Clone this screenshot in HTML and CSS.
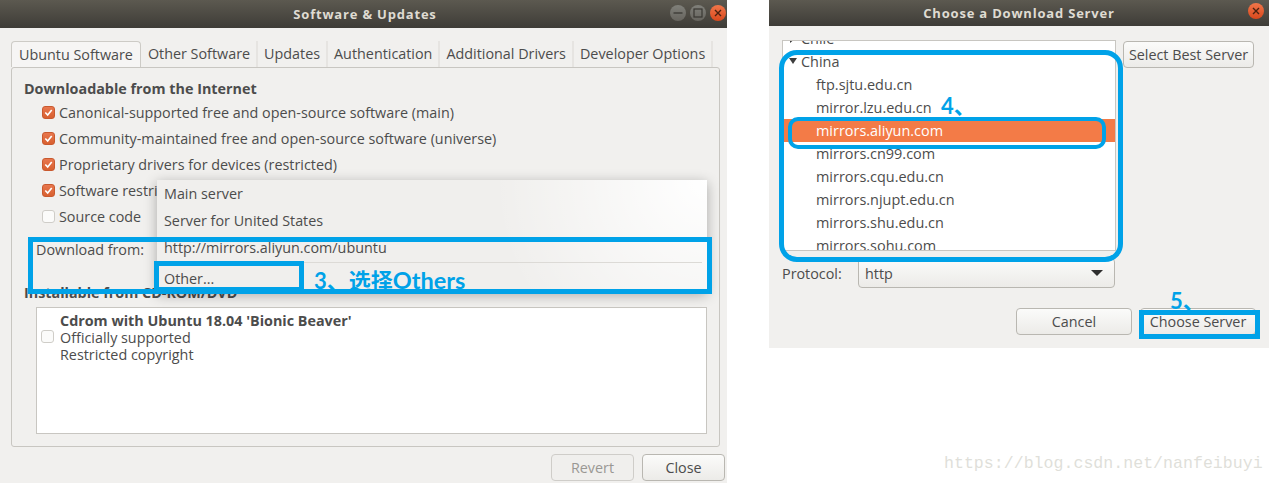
FILE: index.html
```html
<!DOCTYPE html>
<html lang="en">
<head>
  <meta charset="UTF-8">
  <title>Software &amp; Updates</title>
  <link rel="stylesheet" href="styles.css">
</head>
<body>
  <!-- main window -->
  <div class="window main-window">
    <div class="titlebar">
      <span class="title">Software &amp; Updates</span>
      <div class="win-buttons">
        <span class="win-btn"><svg width="16" height="16" viewBox="0 0 16 16"><path d="M3.5 8h9" stroke="#3a3833" stroke-width="1.3"/></svg></span>
        <span class="win-btn"><svg width="16" height="16" viewBox="0 0 16 16"><rect x="4" y="4" width="8" height="8" fill="none" stroke="#3a3833" stroke-width="1.2"/></svg></span>
        <span class="win-btn close"><svg width="16" height="16" viewBox="0 0 16 16"><path d="M5 5l6 6M11 5l-6 6" stroke="#4a2110" stroke-width="1.4"/></svg></span>
      </div>
    </div>

    <div class="tabs">
      <span class="tab active">Ubuntu Software</span>
      <span class="tab">Other Software</span>
      <span class="tab">Updates</span>
      <span class="tab">Authentication</span>
      <span class="tab">Additional Drivers</span>
      <span class="tab">Developer Options</span>
    </div>

    <div class="panel">
      <h2 class="section-title">Downloadable from the Internet</h2>
      <div class="checks">
        <div class="check-row"><span class="check on"><svg viewBox="0 0 12 12"><path d="M2.5 6l2.6 2.7 4.4-5.4" fill="none" stroke="#fff" stroke-width="1.8"/></svg></span>Canonical-supported free and open-source software (main)</div>
        <div class="check-row"><span class="check on"><svg viewBox="0 0 12 12"><path d="M2.5 6l2.6 2.7 4.4-5.4" fill="none" stroke="#fff" stroke-width="1.8"/></svg></span>Community-maintained free and open-source software (universe)</div>
        <div class="check-row"><span class="check on"><svg viewBox="0 0 12 12"><path d="M2.5 6l2.6 2.7 4.4-5.4" fill="none" stroke="#fff" stroke-width="1.8"/></svg></span>Proprietary drivers for devices (restricted)</div>
        <div class="check-row"><span class="check on"><svg viewBox="0 0 12 12"><path d="M2.5 6l2.6 2.7 4.4-5.4" fill="none" stroke="#fff" stroke-width="1.8"/></svg></span>Software restricted by copyright</div>
        <div class="check-row"><span class="check"></span>Source code</div>
      </div>
      <div class="download-label">Download from:</div>
      <h2 class="section-title cdrom-title">Installable from CD-ROM/DVD</h2>
      <div class="cdrom-box">
        <span class="check"></span>
        <div class="cdrom-text">
          <b>Cdrom with Ubuntu 18.04 'Bionic Beaver'</b>
          <span>Officially supported</span>
          <span>Restricted copyright</span>
        </div>
      </div>
    </div>

    <div class="actions">
      <button class="btn disabled">Revert</button>
      <button class="btn">Close</button>
    </div>

    <div class="popup">
      <div class="popup-item">Main server</div>
      <div class="popup-item">Server for United States</div>
      <div class="popup-item">http://mirrors.aliyun.com/ubuntu</div>
      <div class="popup-sep"></div>
      <div class="popup-item">Other...</div>
    </div>
  </div>

  <!-- server chooser -->
  <div class="window server-window">
    <div class="titlebar small">
      <span class="title">Choose a Download Server</span>
      <div class="win-buttons">
        <span class="win-btn close"><svg width="16" height="16" viewBox="0 0 16 16"><path d="M5 5l6 6M11 5l-6 6" stroke="#4a2110" stroke-width="1.4"/></svg></span>
      </div>
    </div>
    <div class="server-body">
      <div class="server-top">
        <div class="tree">
          <div class="tree-row parent"><svg class="arrow" width="10" height="10" viewBox="0 0 10 10"><path d="M2 0l6 5-6 5z" fill="#3d3d3d"/></svg>Chile</div>
          <div class="tree-row parent"><svg class="arrow" width="10" height="10" viewBox="0 0 10 10"><path d="M1 2h8l-4 6z" fill="#3d3d3d"/></svg>China</div>
          <div class="tree-row">ftp.sjtu.edu.cn</div>
          <div class="tree-row">mirror.lzu.edu.cn</div>
          <div class="tree-row selected">mirrors.aliyun.com</div>
          <div class="tree-row">mirrors.cn99.com</div>
          <div class="tree-row">mirrors.cqu.edu.cn</div>
          <div class="tree-row">mirrors.njupt.edu.cn</div>
          <div class="tree-row">mirrors.shu.edu.cn</div>
          <div class="tree-row">mirrors.sohu.com</div>
        </div>
        <button class="btn best">Select Best Server</button>
      </div>
      <div class="protocol">
        <span class="protocol-label">Protocol:</span>
        <div class="combo">http<svg width="12" height="6" viewBox="0 0 12 6"><path d="M0 0h12l-6 6z" fill="#2e2e2e"/></svg></div>
      </div>
      <div class="server-actions">
        <button class="btn wide">Cancel</button>
        <button class="btn wide">Choose Server</button>
      </div>
    </div>
  </div>

  <!-- blue notes drawn over the screenshots -->
  <div class="mark mark-download"></div>
  <div class="mark mark-other"></div>
  <div class="note note-3">3、选择<span class="note-latin">Others</span></div>
  <div class="mark mark-tree"></div>
  <div class="mark mark-aliyun"></div>
  <div class="note note-4">4、</div>
  <div class="mark mark-choose"></div>
  <div class="note note-5">5、</div>

  <div class="watermark">https://blog.csdn.net/nanfeibuyi</div>
</body>
</html>
```

FILE: styles.css
```css
body {
  margin: 0;
  background-color: #fff;
  font-family: 'Open Sans', 'Noto Sans', sans-serif;
  font-size: 14.35px;
  color: #4c4c4c;
  width: 1274px;
  height: 483px;
  overflow: hidden;
  position: relative;
}

.window {
  position: absolute;
  top: 0;
  background-color: #f1f0ee;
  display: flex;
  flex-direction: column;
}

.main-window {
  left: 0;
  width: 727px;
  height: 483px;
}

.server-window {
  left: 769px;
  width: 500px;
  height: 348px;
}

.titlebar {
  height: 28px;
  flex: none;
  background: linear-gradient(#5c5950, #3e3c37);
  display: flex;
  align-items: center;
  justify-content: center;
  position: relative;
}

.titlebar.small {
  height: 26px;
}

.title {
  color: #dfdbd2;
  font-weight: 700;
  font-size: 13px;
  letter-spacing: 0.8px;
}

.main-window .title {
  margin-left: 3px;
}

.win-buttons {
  position: absolute;
  right: 1px;
  top: 5px;
  display: flex;
  gap: 4px;
}

.titlebar.small .win-buttons {
  right: 5px;
  top: 3px;
}

.win-btn {
  width: 16px;
  height: 16px;
  border-radius: 50%;
  background: linear-gradient(#80807a, #66645e);
  display: block;
}

.win-btn.close {
  background: linear-gradient(#f0764a, #d9481c);
}

.win-btn svg {
  display: block;
}

.tabs {
  display: flex;
  height: 26px;
  margin: 13px 0 0 11px;
  flex: none;
}

.tab {
  padding: 0 6px;
  line-height: 25px;
  height: 26px;
  box-sizing: border-box;
  border-right: 2px solid #e6e4e1;
  white-space: nowrap;
}

.tab.active {
  padding: 0 7px;
  background-color: #f6f5f4;
  border: 1px solid #cdcbc6;
  border-bottom: none;
  border-radius: 4px 4px 0 0;
  margin-right: 1px;
}

.panel {
  margin: 0 7px 0 11px;
  height: 380px;
  box-sizing: border-box;
  border: 1px solid #c8c6c1;
  border-radius: 3px;
  padding: 12px 12px 0;
  flex: none;
}

.section-title {
  margin: 0;
  font-size: 14.35px;
  font-weight: 700;
  line-height: 18px;
}

.checks {
  margin: 1px 0 0 18px;
}

.check-row {
  display: flex;
  align-items: center;
  height: 26px;
  gap: 4px;
}

.check {
  width: 13px;
  height: 13px;
  border: 1px solid #cfcdc8;
  border-radius: 3px;
  background-color: #fbfbfa;
  box-sizing: border-box;
  flex: none;
}

.check.on {
  background: linear-gradient(#e8774e, #d8602f);
  border-color: #c9592e;
}

.check svg {
  display: block;
  width: 11px;
  height: 11px;
}

.download-label {
  margin: 11px 0 0 12px;
  line-height: 20px;
}

.cdrom-title {
  margin-top: 24px;
}

.cdrom-box {
  margin: 5px 0 0 12px;
  width: 671px;
  height: 127px;
  box-sizing: border-box;
  border: 1px solid #c8c6c1;
  background-color: #fff;
  display: flex;
  align-items: flex-start;
  padding: 4px 0 0 4px;
  gap: 6px;
}

.cdrom-box .check {
  margin: 18px 0 0;
}

.cdrom-text {
  display: flex;
  flex-direction: column;
  line-height: 17px;
}

.actions {
  display: flex;
  justify-content: flex-end;
  gap: 8px;
  margin: 7px 2px 0 0;
}

.btn {
  font-family: inherit;
  font-size: 14.35px;
  color: #4c4c4c;
  height: 27px;
  width: 83px;
  padding: 0;
  border: 1px solid #b9b7b1;
  border-radius: 4px;
  background: linear-gradient(#fbfbfa, #ecebe8);
}

.btn.disabled {
  color: #9a9894;
  background: #f0efed;
  border-color: #cfcdc9;
}

.popup {
  position: absolute;
  left: 157px;
  top: 180px;
  width: 550px;
  height: 112px;
  background: radial-gradient(circle at 100% 0, #fff, rgba(255, 255, 255, 0) 38%), #f0efed;
  box-shadow: 0 3px 12px rgba(0, 0, 0, 0.3);
}

.popup-item {
  height: 27px;
  line-height: 27px;
  padding-left: 7px;
}

.popup-sep {
  height: 1px;
  margin: 1px 5px 0 0;
  background-color: #dcdad6;
}

.popup-sep + .popup-item {
  margin-top: 2px;
}

.server-body {
  padding: 14px 13px 0;
  display: flex;
  flex-direction: column;
}

.server-top {
  display: flex;
  align-items: flex-start;
  gap: 7px;
}

.tree {
  width: 334px;
  height: 211px;
  box-sizing: border-box;
  border: 1px solid #c8c6c1;
  background-color: #fff;
  overflow: hidden;
  flex: none;
  font-size: 14.45px;
}

.tree-row {
  height: 23px;
  line-height: 23px;
  padding-left: 33px;
  white-space: nowrap;
}

.tree-row:first-child {
  margin-top: -14px;
}

.tree-row.parent {
  padding-left: 18px;
  position: relative;
}

.arrow {
  position: absolute;
  left: 5px;
  top: 6px;
}

.tree-row.selected {
  background-color: #f37b47;
  color: #fff;
}

.best {
  width: 131px;
  margin-top: 1px;
}

.protocol {
  display: flex;
  align-items: center;
  margin-top: 7px;
}

.protocol-label {
  width: 76px;
}

.combo {
  width: 257px;
  height: 30px;
  box-sizing: border-box;
  border: 1px solid #b9b7b1;
  border-radius: 4px;
  background: linear-gradient(#fbfbfa, #ecebe8);
  display: flex;
  align-items: center;
  justify-content: space-between;
  padding: 0 11px 0 6px;
}

.server-actions {
  display: flex;
  justify-content: flex-end;
  gap: 8px;
  margin: 20px 0 0;
}

.wide {
  width: 116px;
}

.mark {
  position: absolute;
  box-sizing: border-box;
  border: 5px solid #00a2e8;
}

.mark-download {
  left: 28px;
  top: 237px;
  width: 684px;
  height: 57px;
}

.mark-other {
  left: 154px;
  top: 261px;
  width: 150px;
  height: 31px;
}

.mark-tree {
  left: 779px;
  top: 50px;
  width: 344px;
  height: 212px;
  border-radius: 18px;
}

.mark-aliyun {
  left: 788px;
  top: 117px;
  width: 318px;
  height: 32px;
  border-width: 4px;
  border-radius: 10px;
}

.mark-choose {
  left: 1139px;
  top: 310px;
  width: 121px;
  height: 29px;
}

.note {
  position: absolute;
  color: #00a2e8;
  font-family: 'Lato', 'Noto Sans CJK SC', sans-serif;
  font-weight: 700;
  font-size: 22px;
  line-height: 26px;
  white-space: nowrap;
}

.note-latin {
  font-size: 23.5px;
}

.note-3 {
  left: 314px;
  top: 267px;
}

.note-4 {
  left: 941px;
  top: 93px;
}

.note-5 {
  left: 1170px;
  top: 288px;
}

.watermark {
  position: absolute;
  left: 944px;
  top: 454px;
  font-family: 'Liberation Mono', monospace;
  font-size: 16.6px;
  line-height: 20px;
  color: #dfdfda;
}
```
